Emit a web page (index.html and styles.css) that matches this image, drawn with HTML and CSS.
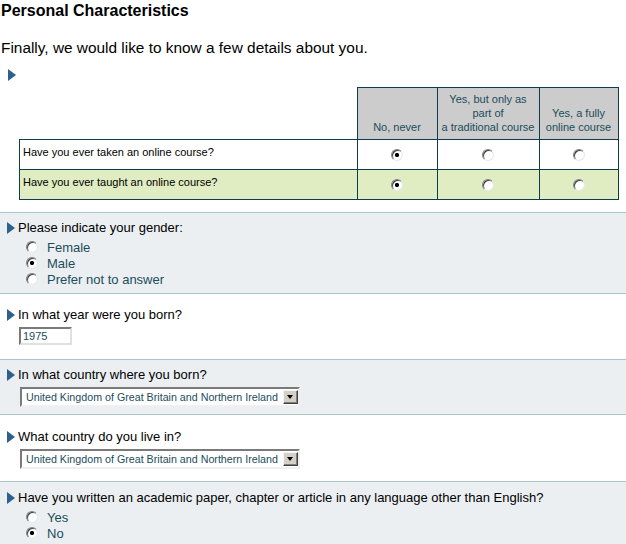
FILE: index.html
```html
<!DOCTYPE html>
<html lang="en">
<head>
    <meta charset="UTF-8">
    <title>Personal Characteristics</title>
    <link rel="stylesheet" href="styles.css">
</head>
<body>
    <h1 class="page-title">Personal Characteristics</h1>
    <p class="intro">Finally, we would like to know a few details about you.</p>
    <div class="arrow-row"><span class="arrow"></span></div>

    <table class="matrix">
        <tr>
            <th class="blank"></th>
            <th class="c1">No, never</th>
            <th class="c2">Yes, but only as part of<br>a traditional course</th>
            <th class="c3">Yes, a fully online course</th>
        </tr>
        <tr>
            <td class="q">Have you ever taken an online course?</td>
            <td><input type="radio" name="taken" checked></td>
            <td><input type="radio" name="taken"></td>
            <td><input type="radio" name="taken"></td>
        </tr>
        <tr class="alt">
            <td class="q">Have you ever taught an online course?</td>
            <td><input type="radio" name="taught" checked></td>
            <td><input type="radio" name="taught"></td>
            <td><input type="radio" name="taught"></td>
        </tr>
    </table>

    <div class="section shaded gender">
        <div class="question"><span class="arrow"></span>Please indicate your gender:</div>
        <ul class="options">
            <li><input type="radio" name="gender"><label>Female</label></li>
            <li><input type="radio" name="gender" checked><label>Male</label></li>
            <li><input type="radio" name="gender"><label>Prefer not to answer</label></li>
        </ul>
    </div>

    <div class="section year-section">
        <div class="question"><span class="arrow"></span>In what year were you born?</div>
        <input class="year" type="text" value="1975">
    </div>

    <div class="section shaded">
        <div class="question"><span class="arrow"></span>In what country where you born?</div>
        <div class="select-box">
            <select><option>United Kingdom of Great Britain and Northern Ireland</option></select>
            <span class="drop-btn"></span>
        </div>
    </div>

    <div class="section live-section">
        <div class="question"><span class="arrow"></span>What country do you live in?</div>
        <div class="select-box">
            <select><option>United Kingdom of Great Britain and Northern Ireland</option></select>
            <span class="drop-btn"></span>
        </div>
    </div>

    <div class="section shaded last">
        <div class="question"><span class="arrow"></span>Have you written an academic paper, chapter or article in any language other than English?</div>
        <ul class="options">
            <li><input type="radio" name="lang"><label>Yes</label></li>
            <li><input type="radio" name="lang" checked><label>No</label></li>
        </ul>
    </div>
</body>
</html>
```

FILE: styles.css
```css
body {
    margin: 0;
    font-family: "Liberation Sans", Arial, sans-serif;
    color: black;
    background-color: white;
}

.page-title {
    font-size: 16px;
    font-weight: bold;
    margin: 0;
    padding: 2px 0 0 1px;
    line-height: 17px;
}

.intro {
    font-size: 15.4px;
    margin: 20px 0 0 1px;
    line-height: 18px;
}

.arrow-row {
    padding: 8px 0 0 8px;
    height: 14px;
}

/* little blue pointer in front of each question */
.arrow {
    display: inline-block;
    width: 0;
    height: 0;
    border-top: 6.5px solid transparent;
    border-bottom: 6.5px solid transparent;
    border-left: 8px solid #2d5f8f;
    vertical-align: -2px;
    margin-right: 3px;
}

.matrix {
    margin: 8px 0 0 19px;
    border-collapse: collapse;
    font-size: 11px;
}

.matrix th {
    background-color: #cccccc;
    color: #1b4d5b;
    font-weight: normal;
    vertical-align: bottom;
    border: 1px solid #0e3c4c;
    padding: 0 2px 5px;
    height: 46px;
    line-height: 14px;
}

.matrix th.blank {
    background: none;
    border: none;
    border-bottom: 1px solid #0e3c4c;
    width: 333px;
}

.matrix th.c1 { width: 75px; }
.matrix th.c2 { width: 97px; }
.matrix th.c3 { width: 74px; }

.matrix td {
    border: 1px solid #0e3c4c;
    height: 29px;
    padding: 0;
    text-align: center;
    vertical-align: middle;
}

.matrix td.q {
    text-align: left;
    vertical-align: top;
    padding: 6px 3px 0;
    height: 23px;
}

.matrix tr.alt td {
    background-color: #e0ecc1;
}

input[type="radio"] {
    -webkit-appearance: none;
    appearance: none;
    width: 12px;
    height: 12px;
    margin: 0;
    border-radius: 50%;
    border: 1px solid;
    border-color: #808080 #e8e8e8 #e8e8e8 #808080;
    box-shadow: inset 1px 1px 0 #404040;
    background-color: white;
    vertical-align: middle;
}

input[type="radio"]:checked {
    background: radial-gradient(circle, black 0, black 1.8px, white 2.4px);
}

.section {
    border-top: 1px solid #a9c4cf;
    padding: 13px 7px 14px;
}

.section.shaded {
    background-color: #ebeff2;
    padding: 7px 7px 7px;
}

.section.gender {
    margin-top: 12px;
    padding: 7px 7px 5px;
}

.section.live-section {
    padding: 14px 7px 12px;
}

.section.last {
    padding: 8px 7px 4px;
}

.question {
    font-size: 13px;
    line-height: 16px;
}

.options {
    list-style: none;
    margin: 4px 0 0;
    padding: 0 0 0 19px;
}

.options li {
    height: 16px;
    line-height: 16px;
    font-size: 13px;
    color: #1b4d5b;
}

.options input {
    margin-right: 9px;
    vertical-align: -1px;
}

.year {
    display: block;
    margin: 4px 0 0 12px;
    width: 45px;
    height: 14px;
    padding: 0 2px;
    font-family: inherit;
    font-size: 11px;
    color: #1b4d5b;
    border: 2px solid;
    border-color: #7a7a7a #e0e0e0 #e0e0e0 #7a7a7a;
}

.select-box {
    display: flex;
    align-items: center;
    width: 276px;
    height: 16px;
    margin: 4px 0 0 13px;
    border: 2px solid;
    border-color: #7a7a7a #f0f0f0 #f0f0f0 #7a7a7a;
    background-color: white;
}

.select-box select {
    -webkit-appearance: none;
    appearance: none;
    flex: 1;
    border: none;
    background: white;
    font-family: inherit;
    font-size: 10.7px;
    color: #1b4d5b;
    padding: 0 0 0 4px;
    height: 16px;
}

.drop-btn {
    position: relative;
    box-sizing: border-box;
    width: 15px;
    height: 14px;
    background-color: #d4d0c8;
    border: 1px solid;
    border-color: #f4f4f4 #404040 #404040 #f4f4f4;
    box-shadow: inset -1px -1px 0 #808080;
}

.drop-btn::after {
    content: "";
    position: absolute;
    left: 3px;
    top: 4px;
    border-left: 3.5px solid transparent;
    border-right: 3.5px solid transparent;
    border-top: 4px solid black;
}
```
